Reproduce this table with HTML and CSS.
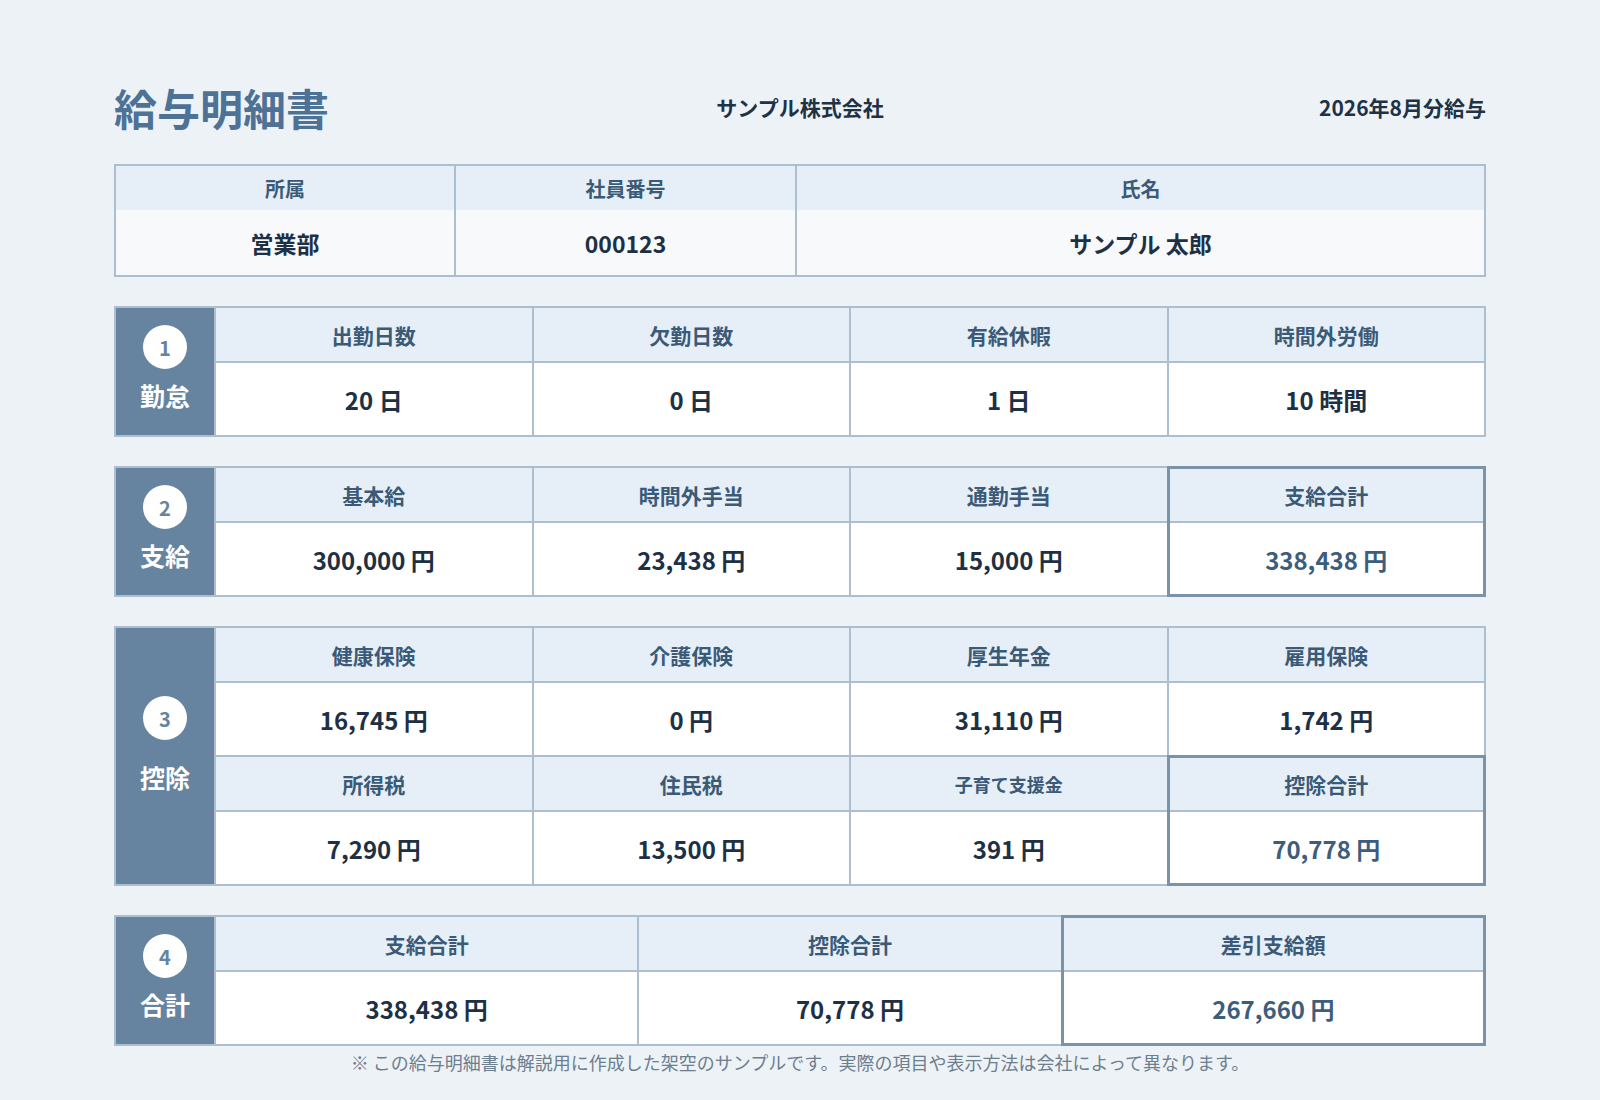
FILE: index.html
```html
<!DOCTYPE html>
<html lang="ja">
<head>
<meta charset="utf-8">
<title>給与明細書</title>
<link rel="stylesheet" href="styles.css">
</head>
<body>
<div class="page">
  <header class="top">
    <h1 class="title">給与明細書</h1>
    <div class="company">サンプル株式会社</div>
    <div class="period">2026年8月分給与</div>
  </header>

  <div class="info">
    <div class="info-col"><div class="info-h">所属</div><div class="info-v">営業部</div></div>
    <div class="info-col"><div class="info-h">社員番号</div><div class="info-v">000123</div></div>
    <div class="info-col"><div class="info-h">氏名</div><div class="info-v">サンプル 太郎</div></div>
  </div>

  <section class="sec">
    <div class="lab"><span class="num">1</span><span class="lab-t">勤怠</span></div>
    <div class="grid">
      <div class="item"><div class="h">出勤日数</div><div class="v">20 日</div></div>
      <div class="item"><div class="h">欠勤日数</div><div class="v">0 日</div></div>
      <div class="item"><div class="h">有給休暇</div><div class="v">1 日</div></div>
      <div class="item"><div class="h">時間外労働</div><div class="v">10 時間</div></div>
    </div>
  </section>

  <section class="sec">
    <div class="lab"><span class="num">2</span><span class="lab-t">支給</span></div>
    <div class="grid">
      <div class="item"><div class="h">基本給</div><div class="v">300,000 円</div></div>
      <div class="item"><div class="h">時間外手当</div><div class="v">23,438 円</div></div>
      <div class="item"><div class="h">通勤手当</div><div class="v">15,000 円</div></div>
      <div class="item total"><div class="h">支給合計</div><div class="v">338,438 円</div></div>
    </div>
  </section>

  <section class="sec">
    <div class="lab tall"><span class="num">3</span><span class="lab-t">控除</span></div>
    <div class="grid rows2">
      <div class="item"><div class="h">健康保険</div><div class="v">16,745 円</div></div>
      <div class="item"><div class="h">介護保険</div><div class="v">0 円</div></div>
      <div class="item"><div class="h">厚生年金</div><div class="v">31,110 円</div></div>
      <div class="item"><div class="h">雇用保険</div><div class="v">1,742 円</div></div>
      <div class="item"><div class="h">所得税</div><div class="v">7,290 円</div></div>
      <div class="item"><div class="h">住民税</div><div class="v">13,500 円</div></div>
      <div class="item"><div class="h sm">子育て支援金</div><div class="v">391 円</div></div>
      <div class="item total"><div class="h">控除合計</div><div class="v">70,778 円</div></div>
    </div>
  </section>

  <section class="sec">
    <div class="lab"><span class="num">4</span><span class="lab-t">合計</span></div>
    <div class="grid c3">
      <div class="item"><div class="h">支給合計</div><div class="v">338,438 円</div></div>
      <div class="item"><div class="h">控除合計</div><div class="v">70,778 円</div></div>
      <div class="item total"><div class="h">差引支給額</div><div class="v">267,660 円</div></div>
    </div>
  </section>

  <p class="note">※ この給与明細書は解説用に作成した架空のサンプルです。実際の項目や表示方法は会社によって異なります。</p>
</div>
</body>
</html>
```

FILE: styles.css
```css
* { box-sizing: border-box; }

body {
  margin: 0;
  background: #edf2f6;
  font-family: "Noto Sans CJK JP", "Noto Sans", sans-serif;
  color: #1e3044;
}

.page {
  width: 1372px;
  margin: 0 auto;
  padding-top: 75px;
}

.top {
  display: grid;
  grid-template-columns: 1fr auto 1fr;
  align-items: center;
  height: 64px;
}

.title {
  margin: 0;
  font-size: 43px;
  line-height: 64px;
  font-weight: 700;
  color: #4d7296;
}

.company,
.period {
  font-size: 21px;
  font-weight: 700;
  color: #1f3246;
}

.period { justify-self: end; }

.info {
  margin-top: 25px;
  display: grid;
  grid-template-columns: 338px 341px 1fr;
  border: 2px solid #adbfce;
}

.info-col + .info-col { border-left: 2px solid #adbfce; }

.info-h {
  height: 44px;
  display: flex;
  align-items: center;
  justify-content: center;
  background: #e6eff7;
  color: #3b5a77;
  font-size: 20px;
  font-weight: 700;
}

.info-v {
  height: 65px;
  display: flex;
  align-items: center;
  justify-content: center;
  background: #f7f9fb;
  color: #1e3044;
  font-size: 23px;
  font-weight: 700;
}

.sec {
  margin-top: 29px;
  display: grid;
  grid-template-columns: 98px 1fr;
  border: 2px solid #adbfce;
  background: #fff;
}

.lab {
  background: #66849f;
  display: flex;
  flex-direction: column;
  align-items: center;
  padding-top: 17px;
  gap: 14px;
}

.lab.tall {
  padding-top: 68px;
  gap: 25px;
}

.num {
  width: 44px;
  height: 44px;
  border-radius: 50%;
  background: #fff;
  color: #66849f;
  font-size: 20px;
  font-weight: 700;
  display: flex;
  align-items: center;
  justify-content: center;
}

.lab-t {
  color: #fff;
  font-size: 25px;
  font-weight: 700;
  line-height: 1;
}

.grid {
  display: grid;
  grid-template-columns: repeat(4, 1fr);
}

.grid.c3 { grid-template-columns: repeat(3, 1fr); }

.item {
  position: relative;
  border-left: 2px solid #adbfce;
}

.grid.rows2 > .item:nth-child(-n+4) { border-bottom: 2px solid #adbfce; }

.h {
  height: 55px;
  border-bottom: 2px solid #adbfce;
  background: #e6eff7;
  display: flex;
  align-items: center;
  justify-content: center;
  color: #3b5a77;
  font-size: 21px;
  font-weight: 700;
}

.h.sm { font-size: 18px; }

.v {
  height: 72px;
  display: flex;
  align-items: center;
  justify-content: center;
  color: #1e3044;
  font-size: 24px;
  font-weight: 700;
}

.item.total .v { color: #3d5d7c; }

.item.total::after {
  content: "";
  position: absolute;
  top: -2px;
  right: -2px;
  bottom: -2px;
  left: -2px;
  border: 3px solid #7a93a9;
  pointer-events: none;
}

.note {
  margin: 6px 0 0;
  text-align: center;
  font-size: 18px;
  line-height: 20px;
  color: #6d7e8f;
}
```
